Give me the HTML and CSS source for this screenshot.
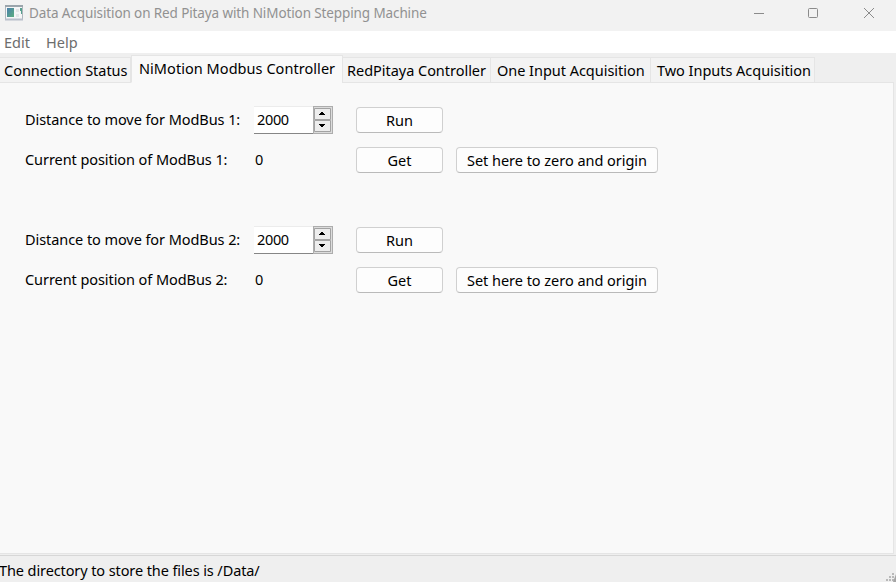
FILE: index.html
```html
<!DOCTYPE html>
<html lang="en">
<head>
<meta charset="utf-8">
<title>Data Acquisition on Red Pitaya with NiMotion Stepping Machine</title>
<link rel="stylesheet" href="styles.css">
</head>
<body>
<div class="window">
  <header class="titlebar">
    <svg class="app-icon" width="19" height="17" viewBox="0 0 19 17">
      <rect x="0.5" y="0.5" width="17" height="14" fill="#f5f6f7" stroke="#afb6bc"/>
      <path d="M0 1h18" stroke="#9ba5ac" stroke-width="2"/>
      <path d="M0 14.5h18" stroke="#b9bfcb" stroke-width="2"/>
      <defs><linearGradient id="g" x1="0" y1="0" x2="1" y2="1"><stop stop-color="#4a7fac"/><stop offset="1" stop-color="#5cae80"/></linearGradient></defs>
      <rect x="2" y="3" width="7" height="9" fill="url(#g)"/>
      <path d="M11 4h3v3h-3zM11 9h3v3h-3z" fill="#e3e5e7"/>
      <path d="M15 3h2v6h-1V6h-1z" fill="#58a08f"/>
    </svg>
    <h1 class="title">Data Acquisition on Red Pitaya with NiMotion Stepping Machine</h1>
    <svg class="controls" width="122" height="12" viewBox="0 0 122 12" fill="none" stroke="#8b8b8b">
      <path d="M0 6.5h10"/>
      <rect x="54.5" y="1.5" width="9" height="9" rx="1"/>
      <path d="M110 1l10 10M120 1l-10 10"/>
    </svg>
  </header>
  <nav class="menubar"><span class="edit">Edit</span><span class="help">Help</span></nav>
  <div class="tabs">
    <div class="tab t1"><span>Connection Status</span></div>
    <div class="tab t2 selected"><span>NiMotion Modbus Controller</span></div>
    <div class="tab t3"><span>RedPitaya Controller</span></div>
    <div class="tab t4"><span>One Input Acquisition</span></div>
    <div class="tab t5"><span>Two Inputs Acquisition</span></div>
  </div>
  <main class="pane">
    <section class="group">
      <div class="label"><span class="distance">Distance to move for ModBus 1:</span></div>
      <div class="spin"><span class="value">2000</span><svg width="20" height="28" viewBox="0 0 20 28"><rect width="20" height="28" fill="#adadad"/><path d="M1 1h18v26H1z" fill="#dcdcdc"/><path d="M1.5 2.5h16v11h-16zM1.5 14.5h16v11h-16z" fill="#ededed" stroke="#a3a3a3"/><path d="M8 6h2v1h1v1h1v1H6V8h1V7h1zM6 18h6v1h-1v1h-1v1H8v-1H7v-1H6z" fill="#000"/></svg></div>
      <button class="run">Run</button>
      <div class="label"><span class="current">Current position of ModBus 1:</span></div>
      <div class="zero">0</div>
      <button>Get</button>
      <button class="origin"><span>Set here to zero and origin</span></button>
    </section>
    <section class="group">
      <div class="label"><span class="distance">Distance to move for ModBus 2:</span></div>
      <div class="spin"><span class="value">2000</span><svg width="20" height="28" viewBox="0 0 20 28"><rect width="20" height="28" fill="#adadad"/><path d="M1 1h18v26H1z" fill="#dcdcdc"/><path d="M1.5 2.5h16v11h-16zM1.5 14.5h16v11h-16z" fill="#ededed" stroke="#a3a3a3"/><path d="M8 6h2v1h1v1h1v1H6V8h1V7h1zM6 18h6v1h-1v1h-1v1H8v-1H7v-1H6z" fill="#000"/></svg></div>
      <button class="run">Run</button>
      <div class="label"><span class="current">Current position of ModBus 2:</span></div>
      <div class="zero">0</div>
      <button>Get</button>
      <button class="origin"><span>Set here to zero and origin</span></button>
    </section>
  </main>
  <footer class="status"><span>The directory to store the files is /Data/</span>
    <svg class="grip" width="10" height="10" viewBox="0 0 10 10" fill="#b9b9b9"><path d="M6 1h2v2H6zM3 4h2v2H3zM6 4h2v2H6zM0 7h2v2H0zM3 7h2v2H3zM6 7h2v2H6z"/><path d="M10 2v8H7z" fill="#a5a5a5"/></svg>
  </footer>
</div>
</body>
</html>
```
FILE: styles.css
```css
* { box-sizing: border-box; }
body {
  margin: 0;
  font-family: "Noto Sans", "Open Sans", sans-serif;
  font-size: 14.5px;
  line-height: 20px;
  color: #000;
  white-space: nowrap;
}
.window {
  width: 896px;
  height: 582px;
  display: flex;
  flex-direction: column;
  background: #efefef;
  overflow: hidden;
}
.titlebar {
  flex: none;
  height: 31px;
  display: flex;
  align-items: flex-start;
  background: #f2f2f2;
  padding: 5px 20px 0 5px;
}
.title {
  margin: -2px 0 0 5px;
  font-size: 13.5px;
  font-weight: 400;
  color: #919191;
  letter-spacing: -0.11px;
}
.controls { margin: 2px 0 0 auto; }
.menubar {
  flex: none;
  height: 22px;
  background: #fff;
  color: #6d6d6d;
  padding: 1px 4px 0;
  display: flex;
  gap: 16px;
}
.tabs {
  flex: none;
  height: 30px;
  display: flex;
  align-items: flex-end;
}
.tab {
  height: 26px;
  border: 1px solid #e5e5e5;
  border-left: 0;
  background: #f3f3f3;
  padding: 2px 0 0 6px;
  letter-spacing: -0.03px;
}
.t1 { width: 131px; padding-left: 4px; }
.t2 { width: 212px; }
.t3 { width: 148px; padding-left: 4px; }
.t4 { width: 160px; }
.t5 { width: 164px; }
.tab.selected {
  height: 28px;
  background: #f9f9f9;
  border-left: 1px solid #e5e5e5;
  border-bottom-color: #f9f9f9;
  letter-spacing: 0.05px;
  padding-left: 7px;
}
.pane {
  flex: none;
  width: 894px;
  height: 472px;
  margin-top: -1px;
  background: #f9f9f9;
  border: 1px solid #e5e5e5;
  border-left: 0;
  padding: 23px 0 0 25px;
  clip-path: polygon(0 1px, 342px 1px, 342px 0, 100% 0, 100% 100%, 0 100%);
}
.group {
  display: grid;
  grid-template-columns: 228px 103px 100px 202px;
  grid-template-rows: 40px 40px;
  height: 120px;
}
.label { padding-top: 3px; letter-spacing: -0.07px; }
.spin {
  width: 79px;
  height: 28px;
  margin-left: 1px;
  display: flex;
  justify-content: space-between;
  background: #fff;
  border-top: 1px solid #ececec;
  border-bottom: 1px solid #868686;
}
.spin .value { padding: 2px 0 0 3px; letter-spacing: -0.35px; }
.spin svg { margin: -1px 0; }
.zero { padding: 3px 0 0 2px; }
button {
  width: 87px;
  height: 26px;
  margin-top: 1px;
  padding: 0;
  border: 1px solid #d0d0d0;
  border-bottom-color: #bababa;
  border-radius: 4px;
  background: #fdfdfd;
  font: inherit;
  color: #000;
}
.run { grid-column: 3 / 5; }
.origin { width: 202px; letter-spacing: -0.03px; }
.status {
  flex: 1;
  display: flex;
  justify-content: space-between;
  margin-top: 1px;
  border-top: 1px solid #d7d7d7;
  padding-top: 4px;
}
.status span { margin-left: -1px; letter-spacing: -0.1px; }
.grip { align-self: flex-end; }
```
